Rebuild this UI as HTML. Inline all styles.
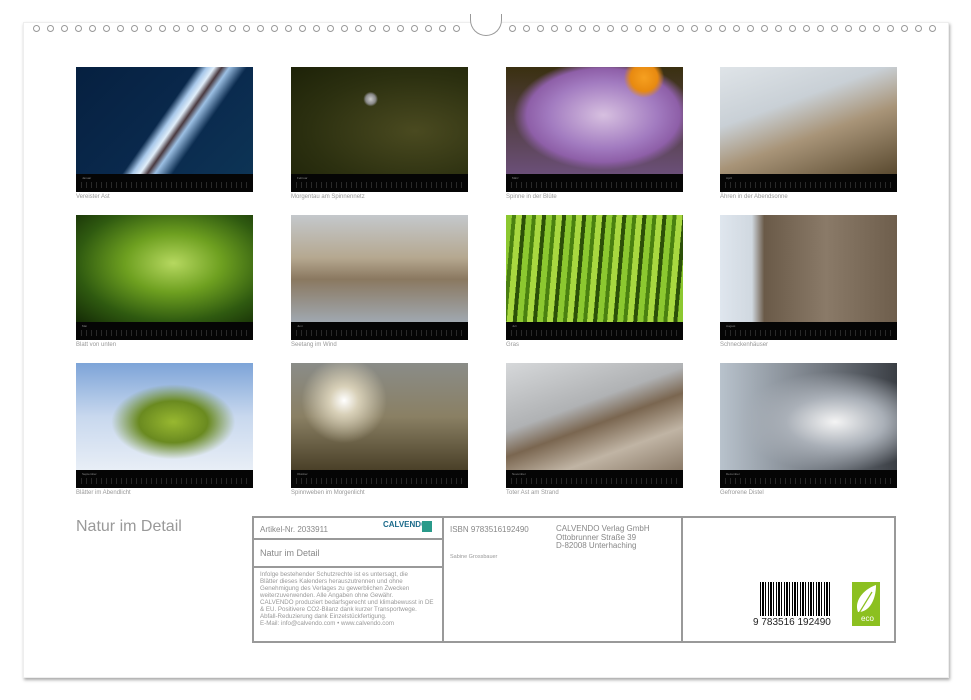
<!DOCTYPE html>
<html><head><meta charset="utf-8"><style>
*{margin:0;padding:0;box-sizing:border-box}
body{width:971px;height:700px;background:#fff;position:relative;overflow:hidden;font-family:"Liberation Sans",sans-serif}
.card{position:absolute;left:23px;top:22px;width:926px;height:656px;background:#fff;box-shadow:1px 2px 3px rgba(0,0,0,.35);border:1px solid #eee}
.ring{position:absolute;top:25px;width:7px;height:7px;border:1px solid #999;border-radius:50%;background:#fff}
.ph{position:absolute;width:177px;height:125px;background:#050505}
.ph .im{position:absolute;left:0;top:0;width:177px;height:107px}
.ph .m{position:absolute;left:6px;top:109px;font-size:3px;color:#888}
.ph .d{position:absolute;left:5px;top:115px;width:166px;height:6px;background:repeating-linear-gradient(90deg,#555 0 1px,transparent 1px 5px);opacity:.45}
.cap{position:absolute;font-size:6px;color:#999}
.t{position:absolute;color:#888}
.ln{position:absolute;background:#999}
</style></head><body>
<div class="card"></div>
<div style="position:absolute;left:470px;top:14px;width:32px;height:22px;border:1px solid #999;border-top:none;border-radius:0 0 16px 16px;background:#fff"></div>
<div id="rings"></div>
<script>
var h='';for(var i=0;i<31;i++){h+='<div class="ring" style="left:'+(33+i*14)+'px"></div>';}
for(var i=0;i<31;i++){h+='<div class="ring" style="left:'+(509+i*14)+'px"></div>';}
document.getElementById('rings').innerHTML=h;
</script>

<div class="ph" style="left:76px;top:67px"><div class="im" style="background:linear-gradient(125deg,transparent 48%,#a8c8ea 52%,#e0eefa 55%,#4a3a40 58%,#9cc0e4 61%,transparent 68%),linear-gradient(135deg,#062040,#0a2a4e 60%,#0d3455)"></div><div class="m">Januar</div><div class="d"></div></div>
<div class="ph" style="left:291px;top:67px"><div class="im" style="background:radial-gradient(circle at 45% 30%,#ccc 0,#888 4%,transparent 6%),radial-gradient(ellipse at 70% 60%,#4a4a20,#2c3010 60%,#1d2208)"></div><div class="m">Februar</div><div class="d"></div></div>
<div class="ph" style="left:506px;top:67px"><div class="im" style="background:radial-gradient(circle at 78% 10%,#f6a020 0,#e88a10 8%,transparent 12%),radial-gradient(ellipse 90px 55px at 55% 45%,#d7c0e0 0,#a27bc0 60%,#8e5fa8 85%,transparent 100%),linear-gradient(#3a3010,#6b4f78)"></div><div class="m">März</div><div class="d"></div></div>
<div class="ph" style="left:720px;top:67px"><div class="im" style="background:linear-gradient(160deg,#dfe4e8 0,#c9d0d6 35%,#a89478 60%,#5a4a30 100%)"></div><div class="m">April</div><div class="d"></div></div>

<div class="ph" style="left:76px;top:215px"><div class="im" style="background:radial-gradient(ellipse at 55% 45%,#b6d860 0,#6ea020 35%,#2f5a10 70%,#142a05)"></div><div class="m">Mai</div><div class="d"></div></div>
<div class="ph" style="left:291px;top:215px"><div class="im" style="background:linear-gradient(180deg,#c4c8cc 0,#b5a890 40%,#8a7860 60%,#a0a8b0 100%)"></div><div class="m">Juni</div><div class="d"></div></div>
<div class="ph" style="left:506px;top:215px"><div class="im" style="background:repeating-linear-gradient(95deg,#8cc830 0 6px,#4a8010 6px 10px,#a8d840 10px 16px,#2c5008 16px 20px)"></div><div class="m">Juli</div><div class="d"></div></div>
<div class="ph" style="left:720px;top:215px"><div class="im" style="background:linear-gradient(90deg,#dfe6ee 0,#d0d8e0 18%,#6a5a48 25%,#8a7a68 60%,#6e5e4c 100%)"></div><div class="m">August</div><div class="d"></div></div>

<div class="ph" style="left:76px;top:363px"><div class="im" style="background:radial-gradient(ellipse at 55% 55%,#98b830 0,#6a8a20 25%,transparent 45%),linear-gradient(#7da4d8,#c8d8ee 50%,#e8eef6)"></div><div class="m">September</div><div class="d"></div></div>
<div class="ph" style="left:291px;top:363px"><div class="im" style="background:radial-gradient(circle at 30% 35%,#fff 0,#d8d0b8 10%,transparent 30%),linear-gradient(#8a8c88,#8a8064 50%,#4a4028)"></div><div class="m">Oktober</div><div class="d"></div></div>
<div class="ph" style="left:506px;top:363px"><div class="im" style="background:linear-gradient(160deg,#d6d8da 0,#b0b2b4 40%,#7a6650 55%,#c0b4a4 75%,#8a7a68 100%)"></div><div class="m">November</div><div class="d"></div></div>
<div class="ph" style="left:720px;top:363px"><div class="im" style="background:radial-gradient(ellipse at 65% 55%,#f4f4f4 0,#aab0b8 30%,transparent 60%),linear-gradient(90deg,#b8c2cc,#70767e 60%,#3a3e44)"></div><div class="m">Dezember</div><div class="d"></div></div>

<div class="cap" style="left:76px;top:194px">Vereister Ast</div>
<div class="cap" style="left:291px;top:194px">Morgentau am Spinnennetz</div>
<div class="cap" style="left:506px;top:194px">Spinne in der Blüte</div>
<div class="cap" style="left:720px;top:194px">Ähren in der Abendsonne</div>
<div class="cap" style="left:76px;top:342px">Blatt von unten</div>
<div class="cap" style="left:291px;top:342px">Seetang im Wind</div>
<div class="cap" style="left:506px;top:342px">Gras</div>
<div class="cap" style="left:720px;top:342px">Schneckenhäuser</div>
<div class="cap" style="left:76px;top:490px">Blätter im Abendlicht</div>
<div class="cap" style="left:291px;top:490px">Spinnweben im Morgenlicht</div>
<div class="cap" style="left:506px;top:490px">Toter Ast am Strand</div>
<div class="cap" style="left:720px;top:490px">Gefrorene Distel</div>

<div class="t" style="left:76px;top:518px;font-size:16px;color:#999">Natur im Detail</div>

<div style="position:absolute;left:252px;top:516px;width:644px;height:127px;border:2px solid #999"></div>
<div class="ln" style="left:442px;top:516px;width:2px;height:127px"></div>
<div class="ln" style="left:681px;top:516px;width:2px;height:127px"></div>
<div class="ln" style="left:252px;top:538px;width:190px;height:2px"></div>
<div class="ln" style="left:252px;top:566px;width:190px;height:2px"></div>
<div class="t" style="left:260px;top:525px;font-size:8px">Artikel-Nr. 2033911</div>
<div class="t" style="left:383px;top:520px;font-size:8px;font-weight:bold;color:#1a6a8a">CALVENDO</div>
<div style="position:absolute;left:422px;top:521px;width:10px;height:11px;background:#2a9a8a"></div>
<div class="t" style="left:260px;top:548px;font-size:9px">Natur im Detail</div>
<div class="t" style="left:260px;top:571px;font-size:6.2px;line-height:7px;color:#999">Infolge bestehender Schutzrechte ist es untersagt, die<br>Blätter dieses Kalenders herauszutrennen und ohne<br>Genehmigung des Verlages zu gewerblichen Zwecken<br>weiterzuverwenden. Alle Angaben ohne Gewähr.<br>CALVENDO produziert bedarfsgerecht und klimabewusst in DE<br>&amp; EU. Positivere CO2-Bilanz dank kurzer Transportwege.<br>Abfall-Reduzierung dank Einzelstückfertigung.<br>E-Mail: info@calvendo.com • www.calvendo.com</div>
<div class="t" style="left:450px;top:525px;font-size:8px">ISBN 9783516192490</div>
<div class="t" style="left:556px;top:525px;font-size:8px;line-height:8.5px">CALVENDO Verlag GmbH<br>Ottobrunner Straße 39<br>D-82008 Unterhaching</div>
<div class="t" style="left:450px;top:554px;font-size:5.5px;color:#999">Sabine Grossbauer</div>

<div style="position:absolute;left:760px;top:582px;width:72px;height:36px;background:repeating-linear-gradient(90deg,#000 0 1px,#fff 1px 2px,#000 2px 4px,#fff 4px 5px,#000 5px 6px,#fff 6px 8px)"></div>
<div style="position:absolute;left:760px;top:616px;width:72px;height:12px;background:#fff"></div>
<div class="t" style="left:753px;top:617px;font-size:10px;color:#222">9 783516 192490</div>
<div style="position:absolute;left:852px;top:582px;width:28px;height:44px;background:#8cc020"></div>
<svg style="position:absolute;left:852px;top:582px" width="28" height="44"><path d="M6 30 C2 20 10 8 24 3 C24 14 20 28 8 30 Z" fill="#fff"/><path d="M4 36 L20 10" stroke="#8cc020" stroke-width="1.2"/></svg>
<div class="t" style="left:861px;top:614px;font-size:8px;color:#fff">eco</div>
</body></html>
